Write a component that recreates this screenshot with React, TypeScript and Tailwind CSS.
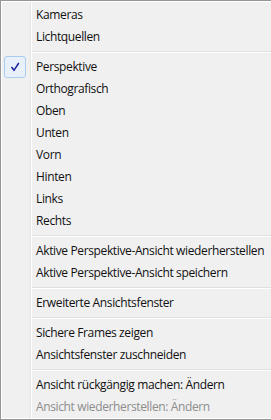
import type { ReactNode } from 'react'

type Entry = { label?: string; checked?: boolean; disabled?: boolean; sep?: boolean }

const entries: Entry[] = [
  { label: 'Kameras' },
  { label: 'Lichtquellen' },
  { sep: true },
  { label: 'Perspektive', checked: true },
  { label: 'Orthografisch' },
  { label: 'Oben' },
  { label: 'Unten' },
  { label: 'Vorn' },
  { label: 'Hinten' },
  { label: 'Links' },
  { label: 'Rechts' },
  { sep: true },
  { label: 'Aktive Perspektive-Ansicht wiederherstellen' },
  { label: 'Aktive Perspektive-Ansicht speichern' },
  { sep: true },
  { label: 'Erweiterte Ansichtsfenster' },
  { sep: true },
  { label: 'Sichere Frames zeigen' },
  { label: 'Ansichtsfenster zuschneiden' },
  { sep: true },
  { label: 'Ansicht rückgängig machen: Ändern' },
  { label: 'Ansicht wiederherstellen: Ändern', disabled: true },
]

function CheckBox(){
  return (
    <div className="w-[22px] h-[22px] ml-[2px] rounded-[3px] border border-[#a9cdee] bg-[#e8f1fb] flex items-center justify-center">
      <svg width="10" height="10" viewBox="0 0 10 10">
        <path d="M1.5 5 L4 8.3 L8.8 1" fill="none" stroke="#1a1f9c" strokeWidth="1.5" />
      </svg>
    </div>
  )
}

function Row({ e }: { e: Entry }){
  let icon: ReactNode = null
  if (e.checked) icon = <CheckBox />
  return (
    <div className="h-[22px] flex items-center">
      <div className="w-[34px] shrink-0 flex items-center">{icon}</div>
      <span className={e.disabled ? 'text-[#8d8d8d] whitespace-nowrap' : 'text-[#111] whitespace-nowrap'}>{e.label}</span>
    </div>
  )
}

export default function App(){
  return (
    <div className="w-[271px] h-[420px] bg-[#979797] pl-px pt-px pb-px overflow-hidden" style={{ fontFamily: '"Open Sans", "Segoe UI", sans-serif' }}>
      <div className="relative h-full bg-[#f0f0f0] border-l border-t border-b border-white pt-[2px] text-[12px] tracking-[-0.37px] leading-none">
        <div className="absolute left-[28px] top-0 bottom-0 w-px bg-[#e2e3e3]" />
        <div className="absolute left-[29px] top-0 bottom-0 w-px bg-white" />
        {entries.map((e, i) => e.sep ? (
          <div key={i} className="h-[8px] pl-[28px] pt-[3px]">
            <div className="h-px bg-[#e0e0e0]" />
            <div className="h-px bg-white" />
          </div>
        ) : (
          <Row key={i} e={e} />
        ))}
      </div>
    </div>
  )
}
